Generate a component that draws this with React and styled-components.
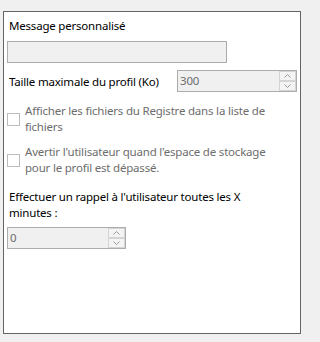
import React from 'react';
import styled, { createGlobalStyle } from 'styled-components';

const Global = createGlobalStyle`
  html, body {
    margin: 0;
    padding: 0;
    background: #f0f0f0;
    overflow: hidden;
  }
  body {
    font-family: "Noto Sans", "Liberation Sans", sans-serif;
    font-size: 11.5px;
    letter-spacing: -0.2px;
  }
`;

const Page = styled.div`
  width: 304px;
  height: 342px;
  padding: 11px 0 0 3px;
  box-sizing: border-box;
`;

const Panel = styled.div`
  width: 298px;
  height: 323px;
  box-sizing: border-box;
  border: 1px solid #646464;
  background: #fff;
  padding: 6px 3px 0 3px;
  display: flex;
  flex-direction: column;
`;

const Label = styled.div`
  line-height: 16px;
  color: #000;
  max-width: ${p => p.wrap || 290}px;
  padding-left: 2px;
  margin-top: ${p => p.gap || 0}px;
`;

const TextBox = styled.div`
  width: 220px;
  height: 22px;
  box-sizing: border-box;
  border: 1px solid #acacac;
  background: #f0f0f0;
  margin-top: ${p => p.gap || 0}px;
`;

const Row = styled.div`
  display: flex;
  align-items: center;
  justify-content: space-between;
  margin-top: ${p => p.gap || 0}px;
  padding-left: 2px;
`;

const Spin = styled.div`
  width: ${p => p.width}px;
  height: 22px;
  box-sizing: border-box;
  border: 1px solid #acacac;
  background: #f0f0f0;
  display: flex;
  align-items: center;
  margin-top: ${p => p.gap || 0}px;
`;

const SpinValue = styled.span`
  flex: 1;
  padding-left: 2px;
  color: #6d6d6d;
  line-height: 16px;
`;

const SpinButtons = styled.div`
  width: 17px;
  height: 20px;
  display: flex;
  flex-direction: column;
  align-self: flex-start;
`;

const SpinButton = styled.div`
  flex: 1;
  box-sizing: border-box;
  border: 1px solid #d4d4d4;
  background: #f4f4f4;
  display: flex;
  align-items: center;
  justify-content: center;
`;

const Check = styled.label`
  display: flex;
  align-items: center;
  gap: 5px;
  margin-top: ${p => p.gap || 0}px;
`;

const Box = styled.span`
  width: 13px;
  height: 13px;
  flex: none;
  box-sizing: border-box;
  border: 1px solid #bcbcbc;
  background: #fff;
`;

const CheckText = styled.span`
  line-height: 16px;
  color: #6d6d6d;
  max-width: 255px;
`;

const Chevron = ({ up }) => (
  <svg width="7" height="4" viewBox="0 0 7 4">
    <path
      d={up ? 'M0.5 3.5 L3.5 0.5 L6.5 3.5' : 'M0.5 0.5 L3.5 3.5 L6.5 0.5'}
      fill="none"
      stroke="#9a9a9a"
      strokeWidth="1"
    />
  </svg>
);

const Spinner = ({ value, width, gap }) => (
  <Spin width={width} gap={gap}>
    <SpinValue>{value}</SpinValue>
    <SpinButtons>
      <SpinButton><Chevron up /></SpinButton>
      <SpinButton><Chevron /></SpinButton>
    </SpinButtons>
  </Spin>
);

export default function App() {
  return (
    <Page>
      <Global />
      <Panel>
        <Label>Message personnalisé</Label>
        <TextBox gap={7} />
        <Row gap={7}>
          <span>Taille maximale du profil (Ko)</span>
          <Spinner value="300" width={120} />
        </Row>
        <Check gap={11}>
          <Box />
          <CheckText>Afficher les fichiers du Registre dans la liste de fichiers</CheckText>
        </Check>
        <Check gap={9}>
          <Box />
          <CheckText>Avertir l'utilisateur quand l'espace de stockage pour le profil est dépassé.</CheckText>
        </Check>
        <Label wrap={272} gap={13}>Effectuer un rappel à l'utilisateur toutes les X minutes :</Label>
        <Spinner value="0" width={119} gap={6} />
      </Panel>
    </Page>
  );
}
